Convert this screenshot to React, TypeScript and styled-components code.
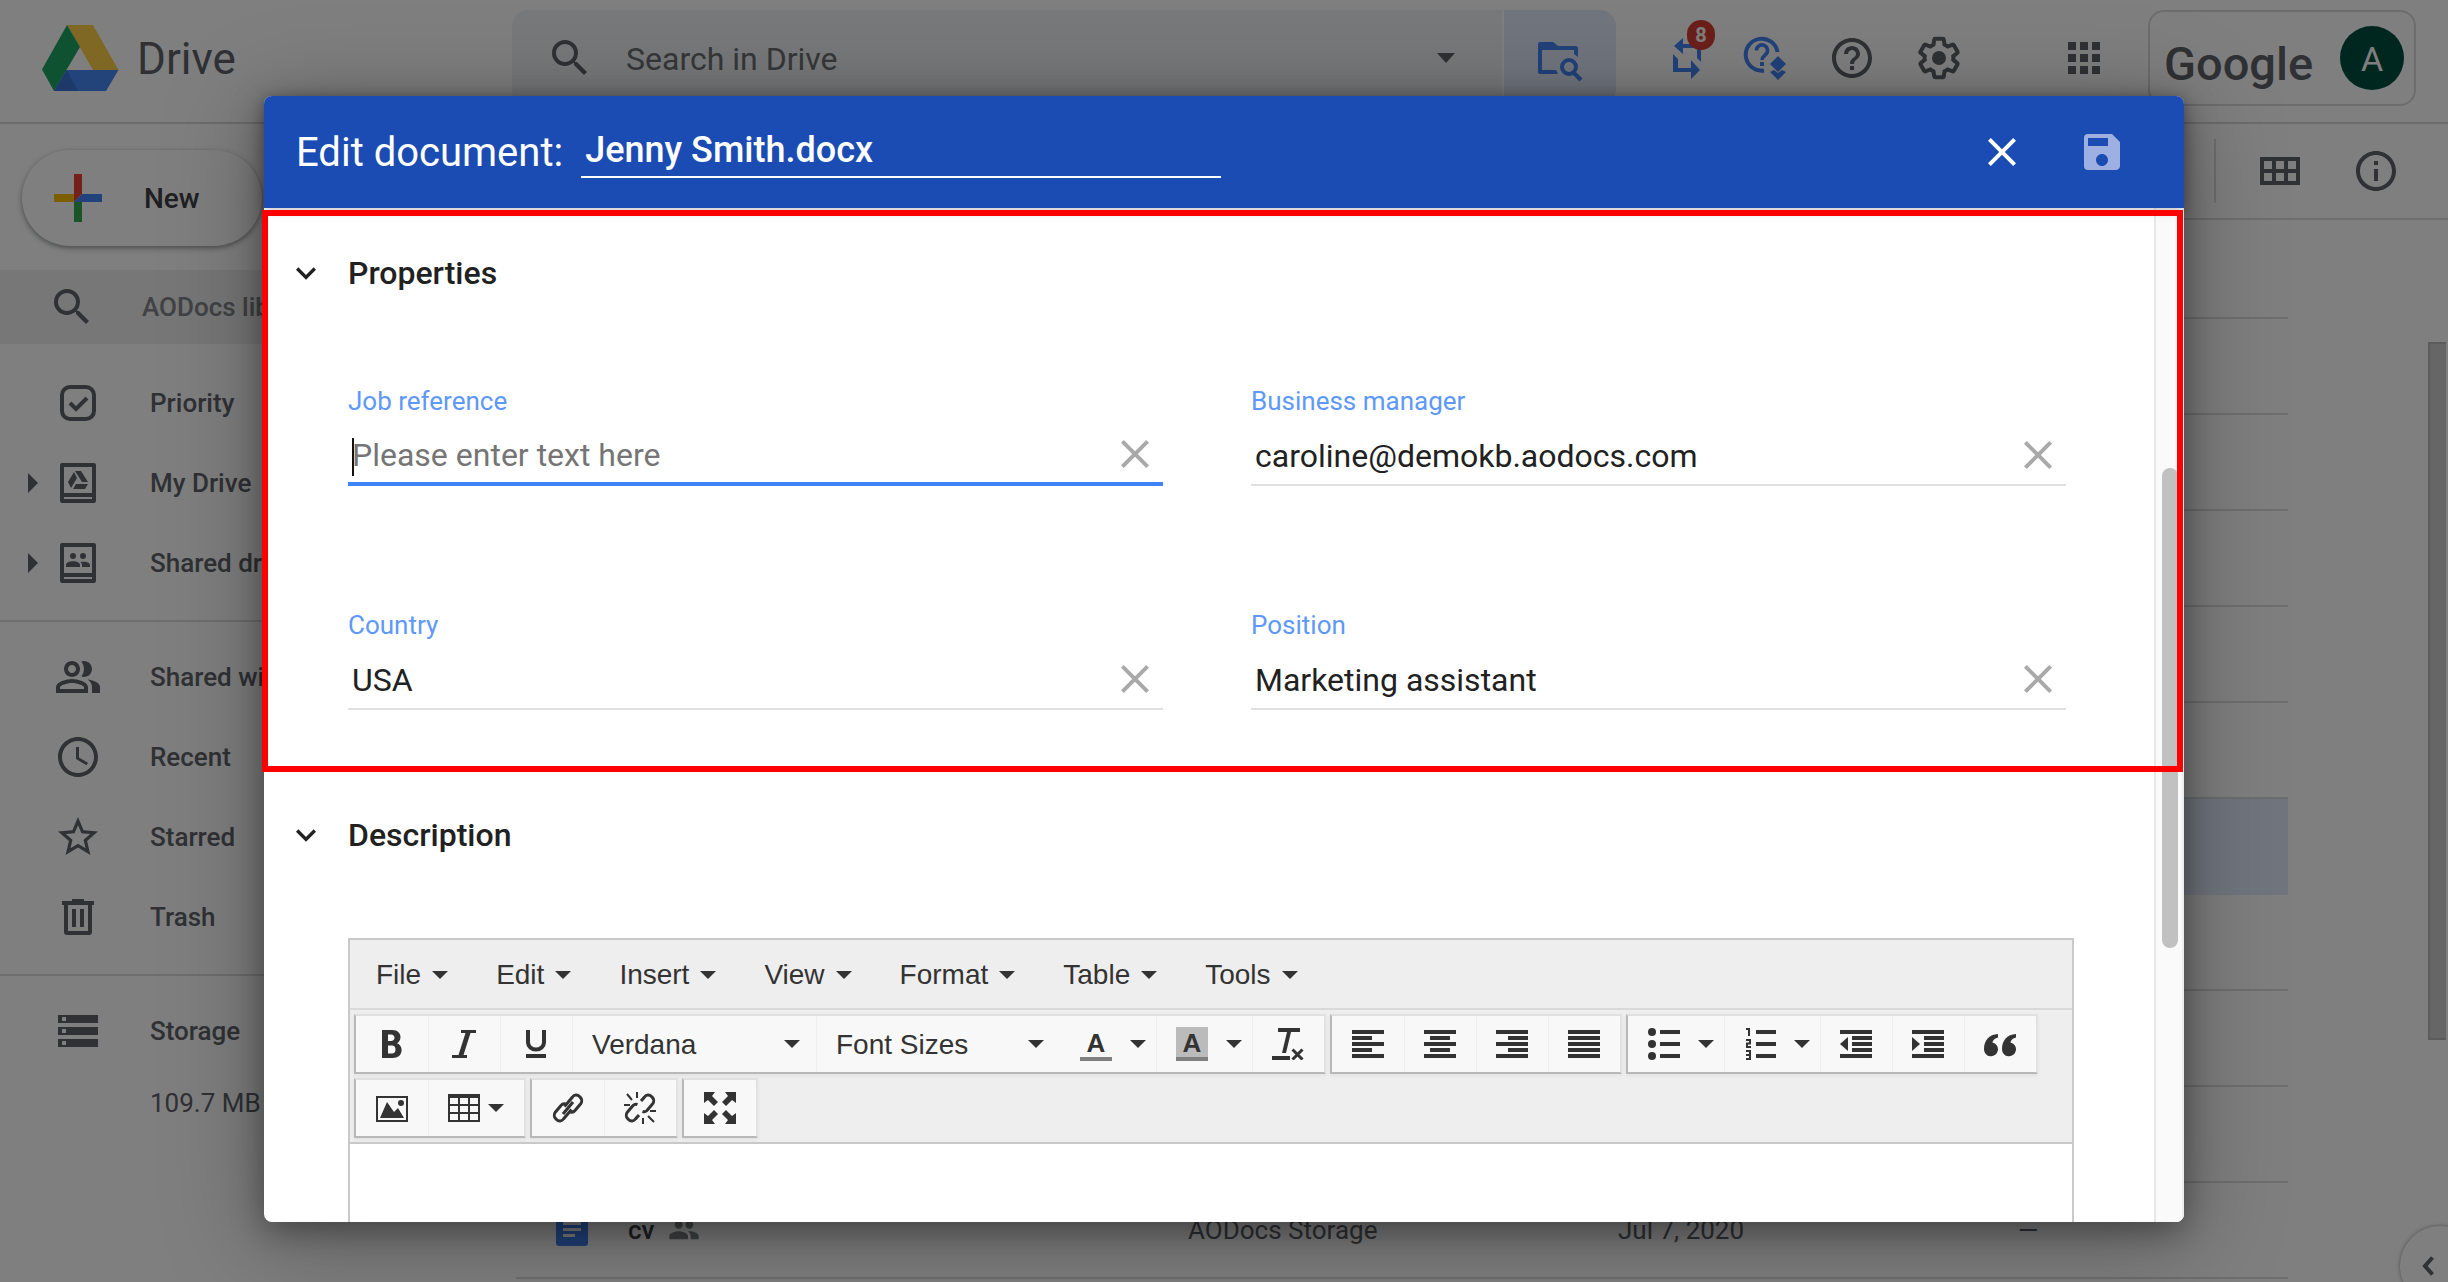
import React from "react";
import styled, { createGlobalStyle, css } from "styled-components";
import {
  MdAccessTime,
  MdApps,
  MdClose,
  MdExpandMore,
  MdHelpOutline,
  MdOutlineInfo,
  MdOutlinePeopleAlt,
  MdPeople,
  MdSave,
  MdSearch,
  MdStarBorder,
  MdStorage,
} from "react-icons/md";

const ROBOTO = `Roboto, "Noto Sans", sans-serif`;
const HELVETICA = `"Liberation Sans", Arial, sans-serif`;

const GlobalStyle = createGlobalStyle`
  *, *::before, *::after { box-sizing: border-box; }
  body { margin: 0; overflow: hidden; background: #fff; font-family: ${ROBOTO}; }
  button, input, select { font: inherit; color: inherit; border: 0; background: none; padding: 0; margin: 0; outline: none; }
  svg { display: block; flex: none; }
`;

const Page = styled.div`
  position: relative;
  display: flex;
  flex-direction: column;
  height: 100vh;
  overflow: hidden;
  color: #5f6368;
`;

/* ---------- Drive header ---------- */

const TopBar = styled.header`
  flex: none;
  display: flex;
  align-items: flex-start;
  height: 124px;
  padding: 10px 32px 0 42px;
  border-bottom: 2px solid #d8d8d8;
`;

const Brand = styled.div`
  display: flex;
  align-items: center;
  gap: 18px;
  width: 470px;
  height: 96px;
  font-size: 44px;
  line-height: 52px;
  span { padding-top: 2px; }
`;

const SearchForm = styled.form`
  flex: 1;
  display: flex;
  align-items: center;
  height: 96px;
  padding: 0 32px 0 34px;
  border-radius: 16px 0 0 16px;
  background: #f1f3f4;
`;

const SearchInput = styled.input`
  flex: 1;
  min-width: 0;
  margin-left: 32px;
  padding-top: 2px;
  font-size: 32px;
  &::placeholder { color: #6b6f73; opacity: 1; }
`;

const IconButton = styled.button<{ $tone?: string }>`
  display: flex;
  align-items: center;
  justify-content: center;
  flex: none;
  width: 48px;
  height: 48px;
  color: ${(p) => p.$tone ?? "inherit"};
`;

const LibrarySearch = styled.button`
  display: flex;
  align-items: center;
  justify-content: center;
  width: 112px;
  height: 96px;
  margin-left: 2px;
  border-radius: 0 16px 16px 0;
  background: #e2eafb;
  color: #4285f4;
`;

const HeaderTools = styled.div`
  display: flex;
  align-items: center;
  gap: 39px;
  height: 96px;
  margin-left: 47px;
`;

const SyncButton = styled(IconButton)`
  position: relative;
  margin-right: -9px;
`;

const Badge = styled.span`
  position: absolute;
  top: -14px;
  right: -4px;
  width: 28px;
  height: 30px;
  border-radius: 15px;
  background: #d93f34;
  color: #fff;
  font-size: 20px;
  font-weight: 700;
  line-height: 30px;
  text-align: center;
`;

const AppsButton = styled(IconButton)`
  margin-left: 58px;
`;

const Account = styled.div`
  display: flex;
  align-items: center;
  justify-content: space-between;
  width: 268px;
  height: 96px;
  margin-left: 40px;
  padding: 0 10px 0 14px;
  border: 2px solid #d8dadd;
  border-radius: 16px;
`;

const GoogleMark = styled.span`
  padding-top: 10px;
  font-size: 47px;
  font-weight: 500;
`;

const Avatar = styled.span`
  width: 64px;
  height: 64px;
  border-radius: 50%;
  background: #004d40;
  color: #fff;
  font-size: 34px;
  line-height: 66px;
  text-align: center;
`;

/* ---------- Drive navigation ---------- */

const Workspace = styled.div`
  flex: 1;
  display: flex;
  min-height: 0;
`;

const Sidebar = styled.nav`
  flex: none;
  width: 512px;
  padding-top: 26px;
  font-size: 26px;
  font-weight: 500;
`;

const NewButton = styled.button`
  display: flex;
  align-items: center;
  gap: 42px;
  width: 240px;
  height: 96px;
  margin-left: 22px;
  padding-left: 32px;
  border-radius: 48px;
  background: #fff;
  box-shadow: 0 2px 4px rgba(60, 64, 67, 0.4), 0 2px 8px rgba(60, 64, 67, 0.2);
  color: #3c4043;
  font-size: 28px;
  font-weight: 500;
`;

const LibraryFilter = styled.a`
  display: flex;
  align-items: center;
  gap: 46px;
  height: 74px;
  margin: 24px 0 19px;
  padding-left: 48px;
  background: #eeeeee;
  color: #5f6368;
  font-weight: 400;
  text-decoration: none;
  span { color: #828488; font-weight: 500; }
`;

const NavItem = styled.a`
  display: flex;
  align-items: center;
  height: 80px;
  padding-left: 28px;
  color: #5f6368;
  text-decoration: none;
`;

const NavArrow = styled.span`
  width: 26px;
`;

const NavLabel = styled.span`
  margin-left: 48px;
`;

const NavRule = styled.hr`
  height: 2px;
  margin: 17px 0 15px;
  border: 0;
  background: #dadce0;
`;

const Quota = styled.p`
  margin: 16px 0 0 150px;
  line-height: 32px;
  font-weight: 400;
`;

/* ---------- Drive file list ---------- */

const Main = styled.main`
  position: relative;
  flex: 1;
  min-width: 0;
`;

const ViewBar = styled.div`
  display: flex;
  align-items: center;
  justify-content: flex-end;
  gap: 48px;
  height: 96px;
  padding-right: 48px;
  border-bottom: 2px solid #dadce0;
`;

const Divider = styled.span`
  width: 2px;
  height: 64px;
  margin-right: -8px;
  background: #dadce0;
`;

const FileArea = styled.div`
  margin: 0 160px 0 4px;
`;

const FileTable = styled.table`
  width: 100%;
  border-collapse: collapse;
  table-layout: fixed;
  font-size: 26px;
  color: #5f6368;
  th { height: 98px; padding: 0; border-bottom: 2px solid #dadce0; }
`;

const FileRow = styled.tr<{ $selected?: boolean }>`
  height: 96px;
  background: ${(p) => (p.$selected ? "#e3ecfc" : "transparent")};
  td { padding: 0; border-bottom: 2px solid ${(p) => (p.$selected ? "#e3ecfc" : "#dadce0")}; }
`;

const FileName = styled.span`
  display: flex;
  align-items: center;
  padding-left: 40px;
  color: #3c4043;
  font-weight: 500;
  svg:first-child { margin-right: 40px; }
  svg:last-child { margin-left: 14px; color: #80868b; }
`;

const PageScroll = styled.div`
  position: absolute;
  top: 218px;
  right: 2px;
  width: 18px;
  height: 698px;
  border: 2px solid #b8b8b8;
  border-right: 0;
  background: #cccccc;
`;

const SideToggle = styled.button`
  position: absolute;
  right: -32px;
  bottom: -24px;
  width: 80px;
  height: 80px;
  padding-left: 22px;
  border-radius: 50%;
  background: #fff;
  box-shadow: 0 0 4px rgba(60, 64, 67, 0.5);
  color: #5f6368;
`;

/* ---------- Dialog ---------- */

const Scrim = styled.div`
  position: absolute;
  inset: 0;
  display: flex;
  justify-content: center;
  padding: 96px 24px 60px;
  background: rgba(0, 0, 0, 0.5);
`;

const Dialog = styled.section`
  position: relative;
  display: flex;
  flex-direction: column;
  width: 100%;
  max-width: 1920px;
  border-radius: 8px;
  background: #fff;
  box-shadow: 0 16px 96px 8px rgba(0, 0, 0, 0.26), 0 8px 32px rgba(0, 0, 0, 0.36);
  color: #212121;
`;

const DialogHeader = styled.header`
  position: relative;
  flex: none;
  display: flex;
  align-items: center;
  height: 112px;
  padding: 0 58px 0 32px;
  border-radius: 8px 8px 0 0;
  background: #1b4cb3;
  box-shadow: 0 2px 12px rgba(0, 0, 0, 0.26);
  color: #fff;
  label { font-size: 40px; }
`;

const TitleInput = styled.input`
  width: 640px;
  height: 52px;
  margin: 0 auto 0 18px;
  padding: 0 0 2px 4px;
  border-bottom: 2px solid #fff;
  font-size: 36px;
  font-weight: 500;
`;

const DialogActions = styled.div`
  display: flex;
  gap: 52px;
`;

const DialogBody = styled.div`
  flex: 1;
  display: flex;
  min-height: 0;
  overflow: hidden;
  border-radius: 0 0 8px 8px;
`;

const Form = styled.div`
  flex: 1;
  min-width: 0;
`;

const Section = styled.section`
  padding: 41px 80px 60px 0;
`;

const SectionTitle = styled.h2`
  margin: 0;
  font-size: 32px;
  font-weight: 500;
  button {
    display: flex;
    align-items: center;
    gap: 22px;
    height: 48px;
    padding-left: 22px;
  }
`;

const FieldGrid = styled.div`
  display: grid;
  grid-template-columns: 1fr 1fr;
  gap: 124px 88px;
  margin: 89px 8px 0 84px;
`;

const FieldLabel = styled.label`
  display: block;
  margin-bottom: 12px;
  color: #5e98fa;
  font-size: 26px;
  line-height: 30px;
`;

const FieldBox = styled.div<{ $active?: boolean }>`
  position: relative;
  display: flex;
  align-items: center;
  height: 58px;
  padding: 0 4px;
  ${(p) =>
    p.$active
      ? css`
          border-bottom: 4px solid #3f83f8;
          &::before {
            content: "";
            position: absolute;
            top: 10px;
            left: 4px;
            width: 2px;
            height: 38px;
            background: #111;
          }
        `
      : css`
          border-bottom: 2px solid #e0e0e0;
        `}
  input { flex: 1; min-width: 0; font-size: 32px; }
  input::placeholder { color: #757575; opacity: 1; }
  button { color: #a9a9a9; padding-bottom: 3px; }
`;

const Highlight = styled.div`
  position: absolute;
  top: 114px;
  left: -2px;
  right: 1px;
  height: 562px;
  border: 6px solid #ff0000;
  pointer-events: none;
`;

const ScrollTrack = styled.div`
  flex: none;
  width: 30px;
  padding: 260px 4px 0 6px;
  border-left: 2px solid #e8e8e8;
  border-right: 2px solid #ededed;
  background: #fafafa;
`;

const ScrollThumb = styled.div`
  width: 16px;
  height: 480px;
  border-radius: 8px;
  background: #c1c1c1;
`;

/* ---------- Rich text editor ---------- */

const Editor = styled.div`
  margin: 79px 0 0 84px;
  border: 2px solid #c9c9c9;
  color: #333;
  font-family: ${HELVETICA};
  font-size: 28px;
`;

const MenuBar = styled.div`
  display: flex;
  height: 70px;
  padding: 2px 0 0 2px;
  border-bottom: 2px solid #d9d9d9;
  background: #eeeeee;
  button {
    display: flex;
    align-items: center;
    gap: 11px;
    padding: 0 24px;
  }
`;

const ToolBar = styled.div`
  display: flex;
  flex-wrap: wrap;
  gap: 4px;
  padding: 4px;
  border-bottom: 2px solid #c9c9c9;
  background: #eeeeee;
`;

const ToolGroup = styled.div`
  display: flex;
  height: 60px;
  border: 2px solid;
  border-color: #e0e0e0 #e2e2e2 #b8b8b8 #b8b8b8;
  background: #f8f8f8;
  box-shadow: 0 2px 4px rgba(0, 0, 0, 0.05);
`;

const Tool = styled.button<{ $menu?: "split" | "joined" }>`
  display: flex;
  align-items: center;
  gap: ${(p) => (p.$menu === "joined" ? 8 : 18)}px;
  width: ${(p) => (p.$menu ? 96 : 72)}px;
  padding-left: 20px;
  & + & { box-shadow: inset 1px 0 #f0f0f0; }
`;

const ToolSelect = styled.span`
  position: relative;
  display: flex;
  align-items: center;
  width: 244px;
  box-shadow: inset 1px 0 #f0f0f0;
  select {
    appearance: none;
    width: 100%;
    height: 100%;
    padding-left: 20px;
  }
  svg {
    position: absolute;
    right: 16px;
    pointer-events: none;
  }
`;

const InkSwatch = styled.span<{ $fill?: string }>`
  width: 32px;
  height: 34px;
  border-bottom: 4px solid #808080;
  background: ${(p) => p.$fill ?? "transparent"};
  font-size: 26px;
  font-weight: 700;
  line-height: 32px;
  text-align: center;
`;

const Canvas = styled.div`
  min-height: 240px;
  background: #fff;
`;

/* ---------- Drawings ---------- */

const Caret = () => (
  <svg width="16" height="8" viewBox="0 0 16 8" fill="currentColor" aria-hidden="true">
    <path d="M0 0h16L8 8z" />
  </svg>
);

const Glyph = ({ size = 32, children }: { size?: number; children: React.ReactNode }) => (
  <svg width={size} height={size} viewBox={`0 0 ${size} ${size}`} fill="currentColor" aria-hidden="true">
    {children}
  </svg>
);

const DriveLogo = () => (
  <svg width="77" height="66" viewBox="0 0 77 66" aria-hidden="true">
    <path fill="#ffcf48" d="M25 0h26l25.500 45H51z" />
    <path fill="#1fa463" d="M25 0l13 22L12 66 0 44.500z" />
    <path fill="#4688f4" d="M24.500 45h52L64 66H12z" />
    <path fill="#3b73d3" d="M24.500 45L36 66H12z" />
  </svg>
);

const PlusMark = () => (
  <Glyph size={48}>
    <path fill="#ea4335" d="M20 0h8v20l-8 8z" />
    <path fill="#fbbc04" d="M0 20h20v8H0z" />
    <path fill="#34a853" d="M20 28h8v20h-8z" />
    <path fill="#4285f4" d="M28 20h20v8H20z" />
  </Glyph>
);

const FolderSearch = () => (
  <Glyph size={48}>
    <path d="M2 10a2 2 0 0 1 2-2h13l5 4h18a2 2 0 0 1 2 2v9l-4-3v-4H6v20h14l2 4H4a2 2 0 0 1-2-2z" />
    <circle cx="33" cy="33" r="7" fill="none" stroke="currentColor" strokeWidth="4" />
    <path d="M37 38l8 8" stroke="currentColor" strokeWidth="4" />
  </Glyph>
);

const SyncMark = () => (
  <Glyph size={48}>
    <path d="M11 12l9-8v6h18v18l-4-4V14H20v6z" />
    <path d="M10 20l5 5v9h13v-8l9 10-9 9v-7H10z" />
  </Glyph>
);

const HelpDiamond = () => (
  <Glyph size={48}>
    <path
      d="M36.500 18A16 16 0 1 0 23 36.500"
      fill="none"
      stroke="currentColor"
      strokeWidth="4"
    />
    <path
      d="M15.500 16.500a5.500 5.500 0 1 1 9 4.200c-2 1.800-3.500 2.400-3.500 5.300"
      fill="none"
      stroke="currentColor"
      strokeWidth="3.600"
    />
    <path d="M19 28h4v4h-4zM37 22l8 8-8 8-8-8zM29 38l4-2 4 3 4-3 4 2-8 8z" />
  </Glyph>
);

const GearMark = () => (
  <svg width="48" height="48" viewBox="0 0 24 24" aria-hidden="true">
    <path
      fill="none"
      stroke="currentColor"
      strokeWidth="2"
      d="M19.140 12.940c.04-.3.06-.61.06-.94 0-.32-.02-.64-.07-.94l2.030-1.580c.18-.14.23-.41.12-.61l-1.920-3.320c-.12-.22-.37-.29-.59-.22l-2.390.96c-.5-.38-1.030-.7-1.620-.94l-.36-2.540c-.04-.24-.24-.41-.48-.41h-3.840c-.24 0-.43.17-.47.41l-.36 2.540c-.59.24-1.130.57-1.620.94l-2.390-.96c-.22-.08-.47 0-.59.22L2.740 8.870c-.12.21-.08.47.12.61l2.030 1.580c-.05.3-.09.63-.09.94s.02.64.07.94l-2.030 1.580c-.18.14-.23.41-.12.61l1.920 3.320c.12.22.37.29.59.22l2.390-.96c.5.38 1.030.7 1.620.94l.36 2.540c.05.24.24.41.48.41h3.840c.24 0 .44-.17.47-.41l.36-2.540c.59-.24 1.130-.56 1.620-.94l2.390.96c.22.08.47 0 .59-.22l1.920-3.320c.12-.22.07-.47-.12-.61z"
    />
    <circle cx="12" cy="12" r="3.500" fill="currentColor" />
  </svg>
);

const GridView = () => (
  <Glyph size={48}>
    <path
      fillRule="evenodd"
      d="M4 10h40v28H4zM8 14v8h8v-8zM20 14v8h8v-8zM32 14v8h8v-8zM8 26v8h8v-8zM20 26v8h8v-8zM32 26v8h8v-8z"
    />
  </Glyph>
);

const PriorityMark = () => (
  <Glyph size={48}>
    <rect x="8" y="8" width="32" height="32" rx="8" fill="none" stroke="currentColor" strokeWidth="4" />
    <path d="M16 24l6 6 11-11" fill="none" stroke="currentColor" strokeWidth="4" />
  </Glyph>
);

const DriveFrame = ({ children }: { children: React.ReactNode }) => (
  <Glyph size={48}>
    <path
      fillRule="evenodd"
      d="M8 4h32a2 2 0 0 1 2 2v36a2 2 0 0 1-2 2H8a2 2 0 0 1-2-2V6a2 2 0 0 1 2-2zM10 8v26h28V8zM10 38v2h28v-2z"
    />
    {children}
  </Glyph>
);

const MyDriveMark = () => (
  <DriveFrame>
    <path d="M21 12h6l7 11h-6zM20 13l3 6-6 10-3-6zM22 25h12l-3 5H19z" />
  </DriveFrame>
);

const SharedDriveMark = () => (
  <DriveFrame>
    <circle cx="19" cy="17" r="3" />
    <circle cx="29" cy="17" r="3" />
    <path d="M12 28v-2c0-5 14-5 14 0v2zM28 28v-2c0-1-.5-2-1.500-3 4-1 9.500 0 9.500 3v2z" />
  </DriveFrame>
);

const TrashMark = () => (
  <Glyph size={48}>
    <path
      fillRule="evenodd"
      d="M18 6h12v2h10v4h-2v27a3 3 0 0 1-3 3H13a3 3 0 0 1-3-3V12H8V8h10zM14 12v26h20V12zM18 16h4v18h-4zM26 16h4v18h-4z"
    />
  </Glyph>
);

const Triangle = () => (
  <svg width="10" height="20" viewBox="0 0 10 20" fill="currentColor" aria-hidden="true">
    <path d="M0 0l10 10L0 20z" />
  </svg>
);

const DocMark = () => (
  <svg width="32" height="32" viewBox="0 0 32 32" aria-hidden="true">
    <rect width="32" height="32" rx="3" fill="#4285f4" />
    <path fill="#fff" d="M7 8h18v3H7zM7 14h18v3H7zM7 20h12v3H7z" />
  </svg>
);

const BoldMark = () => (
  <Glyph>
    <path
      fillRule="evenodd"
      d="M6 2h10c6 0 8.500 3.400 8.500 7 0 3-1.500 5-3.500 6.200 3 1.200 4.600 3.600 4.600 6.800 0 5-3.600 8-9 8H6zM12 6.500v6.500h3c2.200 0 3.500-1.200 3.500-3.200S17.200 6.500 15 6.500zM12 17.500v8h4c2.200 0 3.500-1.500 3.500-4s-1.300-4-3.500-4z"
    />
  </Glyph>
);

const ItalicMark = () => (
  <Glyph>
    <path d="M13 2h15v3h-5.500l-7 22H19v3H4v-3h6.500l7-22H13z" />
  </Glyph>
);

const UnderlineMark = () => (
  <Glyph>
    <path d="M8 2v12.500a8 7 0 0 0 16 0V2" fill="none" stroke="currentColor" strokeWidth="4" />
    <path d="M6 26h20v4H6z" />
  </Glyph>
);

const ClearFormatMark = () => (
  <Glyph>
    <path d="M6 0h22v4h-9l-5 21h-4l5-21H6zM0 28h18v4H0z" />
    <path d="M20.500 21.500l10 10M30.500 21.500l-10 10" stroke="currentColor" strokeWidth="3" />
  </Glyph>
);

const LINE_YS = [2, 8, 14, 20, 26];
const AlignMark = ({ x, width }: { x: number; width: number }) => (
  <Glyph>
    {LINE_YS.map((y, i) => (
      <rect key={y} x={i % 2 ? x : 0} y={y} width={i % 2 ? width : 32} height="4" />
    ))}
  </Glyph>
);

const BulletMark = () => (
  <Glyph>
    {[4, 16, 28].map((y) => (
      <g key={y}>
        <circle cx="4" cy={y} r="4" />
        <rect x="12" y={y - 2} width="20" height="4" />
      </g>
    ))}
  </Glyph>
);

const NumberMark = () => (
  <Glyph>
    <path d="M12 2h20v4H12zM12 14h20v4H12zM12 26h20v4H12z" />
    <path
      d="M2 1h3v7M2 12h4v3.500H3V19h4M2 23h4v8H2M2 27h4"
      fill="none"
      stroke="currentColor"
      strokeWidth="2"
    />
  </Glyph>
);

const IndentMark = ({ outdent }: { outdent?: boolean }) => (
  <Glyph>
    <path d="M0 2h32v4H0zM12 8h20v4H12zM12 14h20v4H12zM12 20h20v4H12zM0 26h32v4H0z" />
    <path d={outdent ? "M8 9v14l-8-7z" : "M0 9v14l8-7z"} />
  </Glyph>
);

const QuoteMark = () => (
  <Glyph>
    <path d="M14 6v3.500c-3 .6-5 2.500-5.600 4.900A7 7 0 1 1 0 21C0 12.500 5 6.500 14 6zM32 6v3.500c-3 .6-5 2.500-5.600 4.900A7 7 0 1 1 18 21C18 12.500 23 6.500 32 6z" />
  </Glyph>
);

const ImageMark = () => (
  <Glyph>
    <path fillRule="evenodd" d="M0 4h32v26H0zM2 6v22h28V6z" />
    <path d="M4 26l7-16 7 10 4-4 6 10z" />
    <circle cx="25" cy="11" r="3" />
  </Glyph>
);

const TableMark = () => (
  <Glyph>
    <path
      fillRule="evenodd"
      d="M0 2h32v28H0zM2 6v6h8V6zM12 6v6h8V6zM22 6v6h8V6zM2 14v6h8v-6zM12 14v6h8v-6zM22 14v6h8v-6zM2 22v6h8v-6zM12 22v6h8v-6zM22 22v6h8v-6z"
    />
  </Glyph>
);

const LinkMark = () => (
  <Glyph>
    <g fill="none" stroke="currentColor" strokeWidth="3">
      <path d="M12.500 14.500l8-9.500a4.500 4.500 0 0 1 7-.5l.5.500a5 5 0 0 1 .5 7l-5.500 6.500a4.500 4.500 0 0 1-4.500 1.500" />
      <path d="M19.500 17.500l-8 9.500a4.500 4.500 0 0 1-7 .5l-.5-.5a5 5 0 0 1-.5-7l5.500-6.500a4.500 4.500 0 0 1 4.500-1.500" />
      <path d="M21 10l-10 12" />
    </g>
  </Glyph>
);

const UnlinkMark = () => (
  <Glyph>
    <g fill="none" stroke="currentColor" strokeWidth="3">
      <path d="M17 9l3.500-4a4.500 4.500 0 0 1 7-.5l.5.500a5 5 0 0 1 .5 7l-5.500 6.500a4.500 4.500 0 0 1-4.500 1" />
      <path d="M15 23l-3.500 4a4.500 4.500 0 0 1-7 .5l-.5-.5a5 5 0 0 1-.5-7l5.500-6.500a4.500 4.500 0 0 1 4.500-1" />
    </g>
    <path
      d="M3 2l5 6M13 0v6M0 13h6M26 19h6M19 26v6M24 24l6 6"
      fill="none"
      stroke="currentColor"
      strokeWidth="2"
    />
  </Glyph>
);

const ExpandMark = () => (
  <Glyph>
    <path d="M0 0h11l-3 4 6 6-4 4-6-6-4 3zM32 0v11l-4-3-6 6-4-4 6-6-3-4zM0 32V21l4 3 6-6 4 4-6 6 3 4zM32 32H21l3-4-6-6 4-4 6 6 4-3z" />
  </Glyph>
);

/* ---------- Content ---------- */

const MENUS = ["File", "Edit", "Insert", "View", "Format", "Table", "Tools"];

const FIELDS = [
  { id: "job", label: "Job reference", value: "", active: true },
  { id: "manager", label: "Business manager", value: "caroline@demokb.aodocs.com" },
  { id: "country", label: "Country", value: "USA" },
  { id: "position", label: "Position", value: "Marketing assistant" },
];

const ROW_COUNT = 9;
const SELECTED_ROW = 5;

type NavEntry = { label: string; icon: React.ReactNode; expandable?: boolean };

const DRIVES: NavEntry[] = [
  { label: "Priority", icon: <PriorityMark /> },
  { label: "My Drive", icon: <MyDriveMark />, expandable: true },
  { label: "Shared drives", icon: <SharedDriveMark />, expandable: true },
];

const VIEWS: NavEntry[] = [
  { label: "Shared with me", icon: <MdOutlinePeopleAlt size={48} /> },
  { label: "Recent", icon: <MdAccessTime size={48} /> },
  { label: "Starred", icon: <MdStarBorder size={48} /> },
  { label: "Trash", icon: <TrashMark /> },
];

const NavList = ({ items }: { items: NavEntry[] }) => (
  <>
    {items.map((item) => (
      <NavItem key={item.label} href="#">
        <NavArrow>{item.expandable && <Triangle />}</NavArrow>
        {item.icon}
        <NavLabel>{item.label}</NavLabel>
      </NavItem>
    ))}
  </>
);

const SectionHeading = ({ children }: { children: React.ReactNode }) => (
  <SectionTitle>
    <button type="button" aria-expanded="true">
      <MdExpandMore size={40} />
      {children}
    </button>
  </SectionTitle>
);

const DrivePage = () => (
  <>
    <TopBar>
      <Brand>
        <DriveLogo />
        <span>Drive</span>
      </Brand>
      <SearchForm>
        <MdSearch size={48} />
        <SearchInput type="search" aria-label="Search in Drive" placeholder="Search in Drive" />
        <IconButton type="button" aria-label="Search options">
          <svg width="18" height="10" viewBox="0 0 18 10" fill="currentColor">
            <path d="M0 0h18l-9 10z" />
          </svg>
        </IconButton>
      </SearchForm>
      <LibrarySearch type="button" aria-label="Search in libraries">
        <FolderSearch />
      </LibrarySearch>
      <HeaderTools>
        <SyncButton type="button" aria-label="Updates" $tone="#4285f4">
          <SyncMark />
          <Badge>8</Badge>
        </SyncButton>
        <IconButton type="button" aria-label="AODocs help" $tone="#4285f4">
          <HelpDiamond />
        </IconButton>
        <IconButton type="button" aria-label="Help">
          <MdHelpOutline size={48} />
        </IconButton>
        <IconButton type="button" aria-label="Settings">
          <GearMark />
        </IconButton>
        <AppsButton type="button" aria-label="Apps">
          <MdApps size={48} />
        </AppsButton>
      </HeaderTools>
      <Account>
        <GoogleMark>Google</GoogleMark>
        <Avatar>A</Avatar>
      </Account>
    </TopBar>

    <Workspace>
      <Sidebar>
        <NewButton type="button">
          <PlusMark />
          New
        </NewButton>
        <LibraryFilter href="#">
          <MdSearch size={48} />
          <span>AODocs libraries</span>
        </LibraryFilter>
        <NavList items={DRIVES} />
        <NavRule />
        <NavList items={VIEWS} />
        <NavRule />
        <NavList items={[{ label: "Storage", icon: <MdStorage size={48} /> }]} />
        <Quota>109.7 MB used</Quota>
      </Sidebar>

      <Main>
        <ViewBar>
          <Divider />
          <IconButton type="button" aria-label="Grid view">
            <GridView />
          </IconButton>
          <IconButton type="button" aria-label="Details">
            <MdOutlineInfo size={48} />
          </IconButton>
        </ViewBar>
        <FileArea>
          <FileTable>
            <colgroup>
              <col />
              <col width="430" />
              <col width="400" />
              <col width="270" />
            </colgroup>
            <thead>
              <tr>
                <th colSpan={4} />
              </tr>
            </thead>
            <tbody>
              {Array.from({ length: ROW_COUNT }, (_, i) => (
                <FileRow key={i} $selected={i === SELECTED_ROW}>
                  <td colSpan={4} />
                </FileRow>
              ))}
              <FileRow>
                <td>
                  <FileName>
                    <DocMark />
                    cv
                    <MdPeople size={32} />
                  </FileName>
                </td>
                <td>AODocs Storage</td>
                <td>Jul 7, 2020</td>
                <td>—</td>
              </FileRow>
            </tbody>
          </FileTable>
        </FileArea>
        <PageScroll />
        <SideToggle type="button" aria-label="Show side panel">
          <svg width="12" height="20" viewBox="0 0 12 20" fill="none" stroke="currentColor" strokeWidth="4">
            <path d="M10.500 1.500L3 10l7.500 8.500" />
          </svg>
        </SideToggle>
      </Main>
    </Workspace>
  </>
);

const EditorTools = () => (
  <ToolBar role="toolbar" aria-label="Formatting">
    <ToolGroup>
      <Tool type="button" aria-label="Bold"><BoldMark /></Tool>
      <Tool type="button" aria-label="Italic"><ItalicMark /></Tool>
      <Tool type="button" aria-label="Underline"><UnderlineMark /></Tool>
      <ToolSelect>
        <select aria-label="Font family" defaultValue="Verdana">
          <option>Verdana</option>
        </select>
        <Caret />
      </ToolSelect>
      <ToolSelect>
        <select aria-label="Font size" defaultValue="Font Sizes">
          <option>Font Sizes</option>
        </select>
        <Caret />
      </ToolSelect>
      <Tool type="button" aria-label="Text color" $menu="split">
        <InkSwatch>A</InkSwatch>
        <Caret />
      </Tool>
      <Tool type="button" aria-label="Background color" $menu="split">
        <InkSwatch $fill="#bbbbbb">A</InkSwatch>
        <Caret />
      </Tool>
      <Tool type="button" aria-label="Clear formatting"><ClearFormatMark /></Tool>
    </ToolGroup>
    <ToolGroup>
      <Tool type="button" aria-label="Align left"><AlignMark x={0} width={20} /></Tool>
      <Tool type="button" aria-label="Align center"><AlignMark x={6} width={20} /></Tool>
      <Tool type="button" aria-label="Align right"><AlignMark x={12} width={20} /></Tool>
      <Tool type="button" aria-label="Justify"><AlignMark x={0} width={32} /></Tool>
    </ToolGroup>
    <ToolGroup>
      <Tool type="button" aria-label="Bullet list" $menu="split"><BulletMark /><Caret /></Tool>
      <Tool type="button" aria-label="Numbered list" $menu="split"><NumberMark /><Caret /></Tool>
      <Tool type="button" aria-label="Decrease indent"><IndentMark outdent /></Tool>
      <Tool type="button" aria-label="Increase indent"><IndentMark /></Tool>
      <Tool type="button" aria-label="Blockquote"><QuoteMark /></Tool>
    </ToolGroup>
    <ToolGroup>
      <Tool type="button" aria-label="Image"><ImageMark /></Tool>
      <Tool type="button" aria-label="Insert table" $menu="joined"><TableMark /><Caret /></Tool>
    </ToolGroup>
    <ToolGroup>
      <Tool type="button" aria-label="Insert link"><LinkMark /></Tool>
      <Tool type="button" aria-label="Remove link"><UnlinkMark /></Tool>
    </ToolGroup>
    <ToolGroup>
      <Tool type="button" aria-label="Fullscreen"><ExpandMark /></Tool>
    </ToolGroup>
  </ToolBar>
);

const EditDialog = () => (
  <Dialog role="dialog" aria-modal="true" aria-label="Edit document">
    <DialogHeader>
      <label htmlFor="title">Edit document:</label>
      <TitleInput id="title" defaultValue="Jenny Smith.docx" />
      <DialogActions>
        <IconButton type="button" aria-label="Close">
          <MdClose size={48} />
        </IconButton>
        <IconButton type="button" aria-label="Save" $tone="#9eafe1">
          <MdSave size={48} />
        </IconButton>
      </DialogActions>
    </DialogHeader>
    <DialogBody>
      <Form>
        <Section>
          <SectionHeading>Properties</SectionHeading>
          <FieldGrid>
            {FIELDS.map((field) => (
              <div key={field.id}>
                <FieldLabel htmlFor={field.id}>{field.label}</FieldLabel>
                <FieldBox $active={field.active}>
                  <input id={field.id} defaultValue={field.value} placeholder="Please enter text here" />
                  <button type="button" aria-label={`Clear ${field.label}`}>
                    <MdClose size={48} />
                  </button>
                </FieldBox>
              </div>
            ))}
          </FieldGrid>
        </Section>
        <Section>
          <SectionHeading>Description</SectionHeading>
          <Editor>
            <MenuBar>
              {MENUS.map((name) => (
                <button key={name} type="button">
                  {name}
                  <Caret />
                </button>
              ))}
            </MenuBar>
            <EditorTools />
            <Canvas />
          </Editor>
        </Section>
      </Form>
      <ScrollTrack>
        <ScrollThumb />
      </ScrollTrack>
    </DialogBody>
    <Highlight />
  </Dialog>
);

export default function App() {
  return (
    <Page>
      <GlobalStyle />
      <DrivePage />
      <Scrim>
        <EditDialog />
      </Scrim>
    </Page>
  );
}
